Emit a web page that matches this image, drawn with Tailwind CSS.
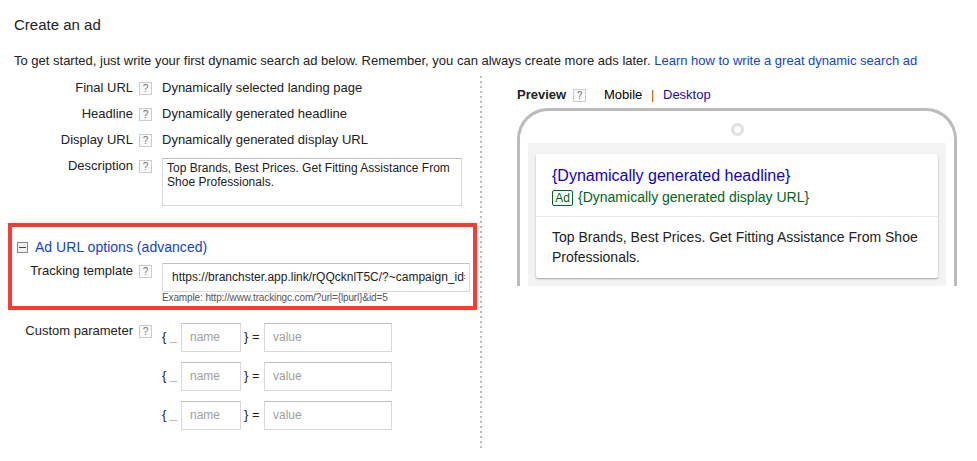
<!DOCTYPE html>
<html lang="en">
<head>
<meta charset="utf-8">
<title>Create an ad</title>
<script src="https://cdn.jsdelivr.net/npm/@tailwindcss/browser@4"></script>
</head>
<body class="w-[977px] h-[461px] overflow-hidden bg-white text-[#222] text-[13px] leading-[16px] font-['Liberation_Sans',Arial,sans-serif] whitespace-nowrap">
<header class="pl-[14px] pt-[16px] h-[75px]">
  <h1 class="text-[15px] leading-[18px]">Create an ad</h1>
  <p class="mt-[19px]"><span>To get started, just write your first dynamic search ad below. Remember, you can always create more ads later.</span> <a class="text-[#1144cc]">Learn how to write a great dynamic search ad</a></p>
</header>
<main class="flex items-start">
  <section class="w-[480px] shrink-0">
    <div class="h-[26px] flex pt-[5px]"><div class="w-[133px] text-right">Final URL</div><i class="not-italic ml-[6px] mt-[2px] size-[13px] border border-[#ccc] bg-[#fafafa] text-[#777] text-[10px] leading-[12px] text-center">?</i><div class="ml-[10px]">Dynamically selected landing page</div></div>
    <div class="h-[26px] flex pt-[5px]"><div class="w-[133px] text-right">Headline</div><i class="not-italic ml-[6px] mt-[2px] size-[13px] border border-[#ccc] bg-[#fafafa] text-[#777] text-[10px] leading-[12px] text-center">?</i><div class="ml-[10px]">Dynamically generated headline</div></div>
    <div class="h-[26px] flex pt-[5px]"><div class="w-[133px] text-right">Display URL</div><i class="not-italic ml-[6px] mt-[2px] size-[13px] border border-[#ccc] bg-[#fafafa] text-[#777] text-[10px] leading-[12px] text-center">?</i><div class="ml-[10px]">Dynamically generated display URL</div></div>
    <div class="h-[70px] flex pt-[5px]"><div class="w-[133px] text-right">Description</div><i class="not-italic ml-[6px] mt-[2px] size-[13px] border border-[#ccc] bg-[#fafafa] text-[#777] text-[10px] leading-[12px] text-center">?</i><div class="ml-[10px] w-[300px] h-[48px] border border-[#d9d9d9] border-t-[#c0c0c0] pl-[4px] pt-[2px] text-[12px] leading-[14px] tracking-[0.015px]">Top Brands, Best Prices. Get Fitting Assistance From<br>Shoe Professionals.</div></div>

    <div class="ml-[8px] w-[469px] h-[87px] border-4 border-[#ff3a30]">
      <div class="flex h-[36px] pl-[5px] pt-[12px]">
        <svg class="mt-[3px] size-[11px]" viewBox="0 0 11 11"><rect x=".5" y=".5" width="10" height="10" fill="#f1f1f1" stroke="#888"/><path d="M2 5.5h7" stroke="#444"/></svg>
        <a class="ml-[7px] text-[14px] tracking-[0.03px] text-[#1144cc]">Ad URL options (advanced)</a>
      </div>
      <div class="flex">
        <div class="w-[121px] text-right">Tracking template</div><i class="not-italic ml-[6px] mt-[2px] size-[13px] border border-[#ccc] bg-[#fafafa] text-[#777] text-[10px] leading-[12px] text-center">?</i>
        <div class="ml-[10px] w-[308px]">
          <div class="h-[29px] border border-[#d9d9d9] border-t-[#c0c0c0] pl-[9px] pr-[4px]"><div class="overflow-hidden text-[12px] leading-[27px]">https://branchster.app.link/rQQcknlT5C/?~campaign_id=</div></div>
          <div class="text-[10px] leading-[12px] tracking-[-0.12px] text-[#555]"><span>Example: http://www.trackingc.com/?url={lpurl}&amp;id=5</span></div>
        </div>
      </div>
    </div>

    <div class="flex pt-[13px]">
      <div class="w-[133px] text-right">Custom parameter</div><i class="not-italic ml-[6px] mt-[2px] size-[13px] border border-[#ccc] bg-[#fafafa] text-[#777] text-[10px] leading-[12px] text-center">?</i>
      <div class="ml-[10px] flex flex-col gap-[10px] leading-[27px]">
        <div class="flex"><span class="w-[19px]">{ <span class="font-bold text-[#888]">_</span></span><div class="w-[60px] h-[29px] border border-[#d9d9d9] border-t-[#c0c0c0] pl-[8px] text-[12px] text-[#a0a0a0]">name</div><span class="w-[23px] pl-[3px]">} =</span><div class="w-[128px] h-[29px] border border-[#d9d9d9] border-t-[#c0c0c0] pl-[8px] text-[12px] text-[#a0a0a0]">value</div></div>
        <div class="flex"><span class="w-[19px]">{ <span class="font-bold text-[#888]">_</span></span><div class="w-[60px] h-[29px] border border-[#d9d9d9] border-t-[#c0c0c0] pl-[8px] text-[12px] text-[#a0a0a0]">name</div><span class="w-[23px] pl-[3px]">} =</span><div class="w-[128px] h-[29px] border border-[#d9d9d9] border-t-[#c0c0c0] pl-[8px] text-[12px] text-[#a0a0a0]">value</div></div>
        <div class="flex"><span class="w-[19px]">{ <span class="font-bold text-[#888]">_</span></span><div class="w-[60px] h-[29px] border border-[#d9d9d9] border-t-[#c0c0c0] pl-[8px] text-[12px] text-[#a0a0a0]">name</div><span class="w-[23px] pl-[3px]">} =</span><div class="w-[128px] h-[29px] border border-[#d9d9d9] border-t-[#c0c0c0] pl-[8px] text-[12px] text-[#a0a0a0]">value</div></div>
      </div>
    </div>
  </section>

  <div class="mt-[1px] w-[2px] h-[372px] shrink-0 bg-[repeating-linear-gradient(to_bottom,#bbb_0px,#bbb_2px,transparent_2px,transparent_5px)]"></div>

  <section class="ml-[35px] w-[440px] shrink-0">
    <div class="flex h-[33px] pt-[12px]">
      <b class="w-[50px]">Preview</b><i class="not-italic ml-[6px] mt-[2px] size-[13px] border border-[#ccc] bg-[#fafafa] text-[#777] text-[10px] leading-[12px] text-center">?</i>
      <span class="ml-[18px] w-[47px] text-black">Mobile</span><span class="w-[12px] text-[#a50]">|</span><a class="text-[#1a0dab]">Desktop</a>
    </div>
    <div class="h-[178px] border-[3px] border-b-0 border-[#bbb] rounded-t-[31px] px-[8px]">
      <div class="h-[32px] flex justify-center pt-[12px]"><span class="size-[13px] rounded-full border-[3px] border-[#e0e0e0]"></span></div>
      <div class="h-[143px] bg-[#f3f3f3] px-[8px] pt-[11px]">
        <div class="h-[124px] bg-white rounded-[2px] shadow-[0_1px_2px_rgba(0,0,0,0.35)]">
          <div class="h-[63px] border-b border-[#e8e8e8] pl-[16px] pt-[12px]">
            <div class="text-[16px] leading-[20px] text-[#1100cc]"><span>{Dynamically generated headline}</span></div>
            <div class="mt-[1px] flex text-[14px] leading-[20px] text-[#006621]"><span class="mt-[3px] w-[21px] h-[16px] border border-[#006621] rounded-[2px] text-center leading-[14px] text-[12px]">Ad</span><span class="ml-[5px]">{Dynamically generated display URL}</span></div>
          </div>
          <div class="pl-[16px] pt-[10px] text-[14px] leading-[20px]"><span>Top Brands, Best Prices. Get Fitting Assistance From Shoe</span><br>Professionals.</div>
        </div>
      </div>
    </div>
  </section>
</main>
</body>
</html>
